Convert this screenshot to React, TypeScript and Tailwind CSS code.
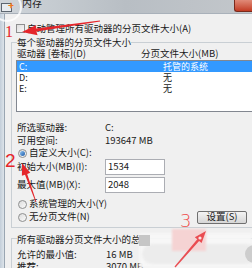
import React from 'react';

const font = "font-['Noto_Sans_CJK_SC','Noto_Sans',sans-serif]";

const Radio = ({ checked }: { checked?: boolean }) => (
  <span className="w-[9px] h-[9px] rounded-full border border-[#8e8f8f] bg-gradient-to-br from-[#dcdcdc] to-[#fbfbfb] flex items-center justify-center shrink-0">
    {checked && <span className="w-[5px] h-[5px] rounded-full bg-gradient-to-br from-[#8cc4f4] to-[#1c5aa6]" />}
  </span>
);

const Row = ({ children, className = '' }: { children: React.ReactNode; className?: string }) => (
  <div className={`flex items-center leading-none ${className}`}>{children}</div>
);

const drives = [
  { d: 'C:', size: '托管的系统', sel: true },
  { d: 'D:', size: '无' },
  { d: 'E:', size: '无' },
];

export default function App() {
  return (
    <div className={`relative w-[252px] h-[268px] overflow-hidden bg-[#f0f0f0] text-[9.5px] text-[#1a1a1a] ${font} flex flex-col`}>
      {/* title bar */}
      <div className="h-[14px] shrink-0 flex items-start bg-gradient-to-r from-[#cfd5da] via-[#b8bec4] to-[#c3c7cb] border-b border-[#a9b1ba]">
        <div className="relative w-[14px] h-[14px] shrink-0">
          <div className="absolute left-[1px] top-[3px] w-[11px] h-[9px] border border-[#5d6670] bg-[#e8ecf0]" />
          <div className="absolute left-[8px] top-[0px] text-[#f07a1a] text-[10px] font-bold leading-none">+</div>
        </div>
        <span className="ml-[8px] -mt-[2px] text-[10px] leading-[10px] text-[#222]">内存</span>
        <div className="ml-auto w-[18px] h-[12px] rounded-bl-[3px] bg-gradient-to-b from-[#e08a78] to-[#c23a22] border-l border-b border-[#7a2a1c]" />
      </div>

      <div className="flex flex-1 min-h-0">
        {/* left window frame */}
        <div className="w-[5px] shrink-0 bg-gradient-to-r from-[#c3ced9] to-[#dde4ea] border-r border-[#9aa6b2]" />
        <div className="flex-1 flex flex-col">
          <Row className="mt-[10px] h-[12px] pl-[11px] gap-[2px]">
            <span className="w-[9px] h-[9px] border border-[#8e8f8f] bg-gradient-to-br from-[#dedede] to-[#fafafa] shrink-0" />
            <span className="whitespace-nowrap">自动管理所有驱动器的分页文件大小(A)</span>
          </Row>

          {/* group 1 */}
          <div className="mt-[8px] ml-[6px] w-[260px] border-l border-t border-b border-[#c9cfd4] pl-[5px] pb-[3px]">
            <div className="-mt-[7px] w-fit bg-[#f0f0f0] h-[12px] leading-[12px] whitespace-nowrap">每个驱动器的分页文件大小</div>
            <Row className="h-[12px] whitespace-nowrap">
              <span className="w-[124px]">驱动器 [卷标](D)</span>
              <span>分页文件大小(MB)</span>
            </Row>
            <div className="-ml-[1px] h-[52px] w-[250px] border border-[#828790] bg-white flex flex-col text-[9px]">
              {drives.map((r) => (
                <div
                  key={r.d}
                  className={`h-[11px] flex items-center leading-[11px] ${r.sel ? 'bg-[#3399ff] text-white' : ''}`}
                >
                  <span className="w-[146px] pl-[2px]">{r.d}</span>
                  <span>{r.size}</span>
                </div>
              ))}
            </div>
            <Row className="mt-[10px] h-[13px]">
              <span className="w-[88px]">所选驱动器:</span>
              <span>C:</span>
            </Row>
            <Row className="h-[13px]">
              <span className="w-[88px]">可用空间:</span>
              <span>193647 MB</span>
            </Row>
            <Row className="h-[11px] pl-[1px] gap-[2px]">
              <Radio checked />
              <span>自定义大小(C):</span>
            </Row>
            <Row className="h-[16px]">
              <span className="w-[88px]">初始大小(MB)(I):</span>
              <span className="w-[60px] h-[16px] border border-[#abadb3] bg-white flex items-center pl-[2px]">1534</span>
            </Row>
            <Row className="mt-[2px] h-[16px]">
              <span className="w-[88px]">最大值(MB)(X):</span>
              <span className="w-[60px] h-[16px] border border-[#abadb3] bg-white flex items-center pl-[2px]">2048</span>
            </Row>
            <Row className="mt-[5px] h-[13px] pl-[1px] gap-[2px]">
              <Radio />
              <span>系统管理的大小(Y)</span>
            </Row>
            <Row className="h-[13px]">
              <span className="w-[180px] flex items-center gap-[2px] pl-[1px]">
                <Radio />
                <span>无分页文件(N)</span>
              </span>
              <span className="w-[50px] h-[13px] rounded-[2px] border border-[#707070] bg-gradient-to-b from-[#f4f4f4] to-[#d6d6d6] flex items-center justify-center">
                设置(S)
              </span>
            </Row>
          </div>

          {/* group 2 */}
          <div className="mt-[10px] ml-[6px] w-[260px] border-l border-t border-[#c9cfd4] pl-[5px] flex-1">
            <div className="-mt-[6px] w-fit bg-[#f0f0f0] h-[12px] leading-[12px] whitespace-nowrap">所有驱动器分页文件大小的总数</div>
            <Row className="mt-[4px] h-[12px]">
              <span className="w-[89px]">允许的最小值:</span>
              <span>16 MB</span>
            </Row>
            <Row className="h-[12px]">
              <span className="w-[89px]">推荐:</span>
              <span>3070 MB</span>
            </Row>
          </div>
        </div>
      </div>

      {/* magnifier circle over the icon */}
      <div className="absolute -left-[8px] -top-[8px] w-[30px] h-[30px] rounded-full border-[2px] border-white/80 pointer-events-none" />

      {/* watermark blur at bottom right */}
      <div className="absolute left-[139px] top-[233px] w-[113px] h-[35px] bg-[#f7f7f7]/95 blur-[1px] pointer-events-none" />
      <div className="absolute left-[142px] top-[244px] w-[115px] h-[20px] rounded-full bg-[#ececec] blur-[1px] pointer-events-none" />
      <div className="absolute left-[139px] top-[235px] w-[11px] h-[11px] bg-[#c6c6c6] blur-[0.5px] pointer-events-none" />
      <div className="absolute left-[172px] top-[229px] w-[34px] h-[22px] bg-[#f5d3d3] blur-[1px] pointer-events-none" />
      <div className="absolute left-[245px] top-[245px] w-[12px] h-[18px] rounded-l-full bg-[#cdcdcd] blur-[0.5px] pointer-events-none" />

      {/* red annotations */}
      <svg className="absolute inset-0 pointer-events-none" width="252" height="268" viewBox="0 0 252 268">
        <polygon fill="#e5262b" points="22,32 37.6,35.2 36.4,31.6 100.1,21.5 99.9,20.5 35.9,28.6 36.2,24.9" />
        <polygon fill="#e5262b" points="22,163 30.3,172.8 27.2,173.9 36.4,201.9 35.6,202.1 25,174.7 21.9,175.8" />
        <polygon fill="#e8343a" fillOpacity="0.85" points="206,231 201.6,243 199.1,240.9 175.5,267.4 174.5,266.6 197.3,239.3 194.8,237.2" />
        <circle cx="200" cy="238" r="1.6" fill="#fbe3e3" />
        <text x="5" y="37" fill="#e5262b" fontSize="16" fontFamily="'Liberation Serif',serif">1</text>
        <text x="5" y="167" fill="#e5262b" fontSize="19" fontFamily="'Liberation Sans',sans-serif">2</text>
        <text x="180" y="227" fill="#ef4b4b" fontSize="18" fontFamily="'DejaVu Sans',sans-serif" fontWeight="300">3</text>
      </svg>
    </div>
  );
}
